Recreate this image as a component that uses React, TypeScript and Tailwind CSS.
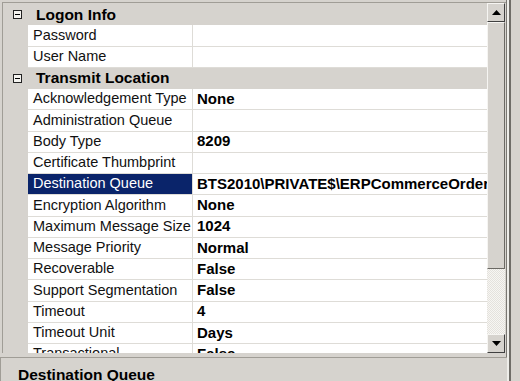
import React from 'react'

type Row =
  | { kind: 'cat'; name: string }
  | { kind: 'prop'; name: string; value?: string; selected?: boolean }

const rows: Row[] = [
  { kind: 'cat', name: 'Logon Info' },
  { kind: 'prop', name: 'Password' },
  { kind: 'prop', name: 'User Name' },
  { kind: 'cat', name: 'Transmit Location' },
  { kind: 'prop', name: 'Acknowledgement Type', value: 'None' },
  { kind: 'prop', name: 'Administration Queue' },
  { kind: 'prop', name: 'Body Type', value: '8209' },
  { kind: 'prop', name: 'Certificate Thumbprint' },
  { kind: 'prop', name: 'Destination Queue', value: 'BTS2010\\PRIVATE$\\ERPCommerceOrders', selected: true },
  { kind: 'prop', name: 'Encryption Algorithm', value: 'None' },
  { kind: 'prop', name: 'Maximum Message Size (KB)', value: '1024' },
  { kind: 'prop', name: 'Message Priority', value: 'Normal' },
  { kind: 'prop', name: 'Recoverable', value: 'False' },
  { kind: 'prop', name: 'Support Segmentation', value: 'False' },
  { kind: 'prop', name: 'Timeout', value: '4' },
  { kind: 'prop', name: 'Timeout Unit', value: 'Days' },
  { kind: 'prop', name: 'Transactional', value: 'False' },
]

function Minus() {
  return (
    <div className="w-[9px] h-[9px] border border-[#222] bg-[#f4f3ef] flex items-center justify-center">
      <div className="w-[5px] h-[1px] bg-black" />
    </div>
  )
}

function Arrow({ up }: { up?: boolean }) {
  return (
    <svg width="9" height="5" viewBox="0 0 9 5">
      {up ? <polygon points="4.5,0 9,5 0,5" fill="#000" /> : <polygon points="0,0 9,0 4.5,5" fill="#000" />}
    </svg>
  )
}

function ScrollButton({ up }: { up?: boolean }) {
  return (
    <div className="h-[19px] shrink-0 w-full bg-[#d6d3ce] border-t border-l border-t-[#f6f5f2] border-l-[#f6f5f2] border-r border-b border-r-[#404040] border-b-[#404040] flex items-center justify-center">
      <Arrow up={up} />
    </div>
  )
}

export default function App() {
  return (
    <div
      className="w-[520px] h-[381px] bg-[#d6d3ce] overflow-hidden relative text-[14.5px] text-black"
      style={{ fontFamily: '"Liberation Sans", Arial, sans-serif' }}
    >
      <div className="flex h-[357px]">
        <div className="w-[506px] pt-[2px] pl-[2px]">
          <div className="flex h-[351px] border-t border-l border-[#a09d96] pt-[1px]">
            <div className="w-[484px] overflow-hidden">
              {rows.map((r, i) =>
                r.kind === 'cat' ? (
                  <div key={i} className="h-[21.25px] flex items-center bg-[#d6d3ce] whitespace-nowrap">
                    <div className="w-[25px] flex justify-end pr-[6px] pl-[9px]">
                      <Minus />
                    </div>
                    <span className="pl-[8px] font-bold text-[15.5px] -mt-[1px]">{r.name}</span>
                  </div>
                ) : (
                  <div key={i} className="h-[21.25px] flex whitespace-nowrap">
                    <div className="w-[25px] shrink-0 bg-[#d6d3ce]" />
                    <div
                      className={
                        'w-[164px] shrink-0 overflow-hidden pl-[5px] flex items-center border-b border-[#dedcd7] ' +
                        (r.selected ? 'bg-[#0a246a] text-white' : 'bg-white text-[#111]')
                      }
                    >
                      {r.name}
                    </div>
                    <div className="w-[1px] shrink-0 bg-[#dedcd7]" />
                    <div className="flex-1 overflow-hidden pl-[4px] flex items-center bg-white border-b border-[#dedcd7] font-bold text-[15px]">
                      {r.value}
                    </div>
                  </div>
                ),
              )}
            </div>
            <div className="w-[18px] flex flex-col -mt-[1px]">
              <ScrollButton up />
              <div className="h-[247px] shrink-0 bg-[#d6d3ce] border-t border-l border-[#f6f5f2] border-r border-b border-r-[#6b6964] border-b-[#6b6964]" />
              <div
                className="flex-1"
                style={{
                  backgroundColor: '#f2f1ee',
                  backgroundImage: 'repeating-conic-gradient(#f7f6f3 0% 25%, #e4e2dd 0% 50%)',
                  backgroundSize: '2px 2px',
                }}
              />
              <ScrollButton />
            </div>
          </div>
        </div>
        <div className="w-[1px] bg-[#7a7873]" />
        <div className="w-[2px] bg-[#eeede9]" />
        <div className="w-[2px] bg-[#6f6d68]" />
        <div className="flex-1 bg-[#d6d3ce]" />
      </div>
      <div className="flex h-[24px]">
        <div className="w-[507px] border-t border-l border-[#a09d96] bg-[#d6d3ce] pl-[17px] pt-[5px] font-bold text-[15.5px]">
          Destination Queue
        </div>
        <div className="w-[2px] bg-[#eeede9]" />
        <div className="w-[2px] bg-[#6f6d68]" />
      </div>
    </div>
  )
}
